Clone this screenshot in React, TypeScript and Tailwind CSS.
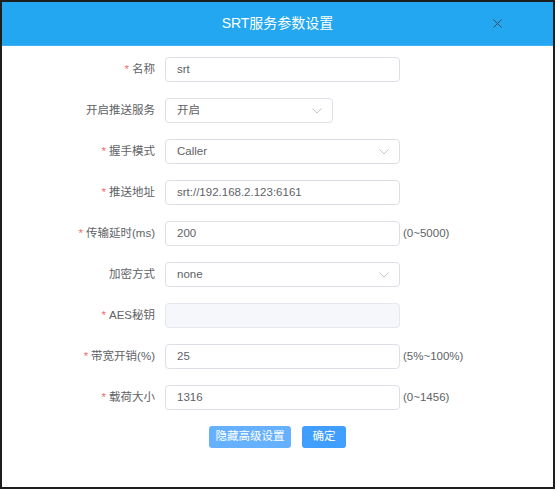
import React from "react";

const font = { fontFamily: '"Liberation Sans", "Noto Sans CJK SC", sans-serif' };

function Chevron() {
  return (
    <svg width="10" height="6" viewBox="0 0 10 6" className="shrink-0">
      <path d="M0.5 0.5 L5 5 L9.5 0.5" fill="none" stroke="#c0c4cc" strokeWidth="1" />
    </svg>
  );
}

type Row = {
  label: string;
  req?: boolean;
  value: string;
  kind: "input" | "select" | "disabled";
  w?: string;
  hint?: string;
};

const rows: Row[] = [
  { label: "名称", req: true, value: "srt", kind: "input" },
  { label: "开启推送服务", value: "开启", kind: "select", w: "narrow" },
  { label: "握手模式", req: true, value: "Caller", kind: "select" },
  { label: "推送地址", req: true, value: "srt://192.168.2.123:6161", kind: "input" },
  { label: "传输延时(ms)", req: true, value: "200", kind: "input", hint: "(0~5000)" },
  { label: "加密方式", value: "none", kind: "select" },
  { label: "AES秘钥", req: true, value: "", kind: "disabled" },
  { label: "带宽开销(%)", req: true, value: "25", kind: "input", hint: "(5%~100%)" },
  { label: "载荷大小", req: true, value: "1316", kind: "input", hint: "(0~1456)" },
];

export default function App() {
  return (
    <div className="w-[557px] h-[491px] bg-white" style={font}>
      <div className="w-[555px] h-[489px] border-2 border-[#1e1e1e] flex flex-col bg-white">
        <div className="h-[44px] bg-[#24a7f1] border-b border-[#3fb3f3] flex items-center justify-center relative shrink-0">
          <span className="text-white text-[14px]">SRT服务参数设置</span>
          <svg className="absolute left-[491px] top-[17px]" width="9" height="9" viewBox="0 0 9 9">
            <path d="M0.5 0.5 L8.5 8.5 M8.5 0.5 L0.5 8.5" stroke="#3d4a57" strokeWidth="1" />
          </svg>
        </div>
        <div className="flex flex-col gap-[16px] pt-[11px]">
          {rows.map((r) => (
            <div key={r.label} className="flex items-center h-[25px]">
              <div className="w-[153px] text-right text-[11.5px] text-[#606266] whitespace-nowrap">
                {r.req && <span className="text-[#f56c6c] mr-[3px]">*</span>}
                {r.label}
              </div>
              <div
                className={
                  "ml-[10px] h-[25px] rounded-[4px] border flex items-center pl-[11px] pr-[10px] text-[11.5px] text-[#606266] " +
                  (r.w === "narrow" ? "w-[168px] " : "w-[235px] ") +
                  (r.kind === "disabled" ? "bg-[#f5f7fa] border-[#e4e7ed]" : "bg-white border-[#dcdfe6]")
                }
              >
                <span className="flex-1 truncate">{r.value}</span>
                {r.kind === "select" && <Chevron />}
              </div>
              {r.hint && <span className="ml-[3px] text-[11.5px] text-[#606266]">{r.hint}</span>}
            </div>
          ))}
        </div>
        <div className="flex justify-center gap-[11px] mt-[16px]">
          <button className="w-[82px] h-[22px] rounded-[3px] bg-[#66b1ff] text-white text-[11.5px] flex items-center justify-center">
            隐藏高级设置
          </button>
          <button className="w-[44px] h-[22px] rounded-[3px] bg-[#409eff] text-white text-[11.5px] flex items-center justify-center">
            确定
          </button>
        </div>
      </div>
    </div>
  );
}
